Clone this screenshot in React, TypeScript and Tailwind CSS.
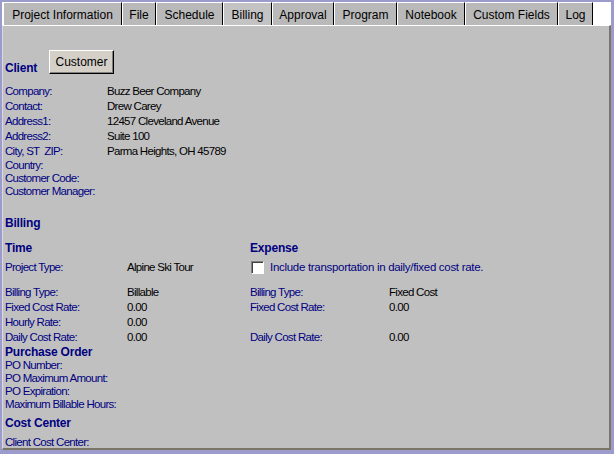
import React from "react";

const tabs = [
	{ name: "Project Information", w: "w-[119px]" },
	{ name: "File", w: "w-[34px]" },
	{ name: "Schedule", w: "w-[67px]" },
	{ name: "Billing", w: "w-[49px]", active: true },
	{ name: "Approval", w: "w-[62px]" },
	{ name: "Program", w: "w-[63px]" },
	{ name: "Notebook", w: "w-[68px]" },
	{ name: "Custom Fields", w: "w-[93px]" },
	{ name: "Log", w: "w-[35px]" },
];

const client: [string, string, string][] = [
	["Company:", "Buzz Beer Company", "h-[15px]"],
	["Contact:", "Drew Carey", "h-[15px]"],
	["Address1:", "12457 Cleveland Avenue", "h-[15px]"],
	["Address2:", "Suite 100", "h-[15px]"],
	["City, ST  ZIP:", "Parma Heights, OH 45789", "h-[15px]"],
	["Country:", "", "h-[13px]"],
	["Customer Code:", "", "h-[13px]"],
	["Customer Manager:", "", "h-[13px]"],
];

function Heading({ children, className = "" }: { children: React.ReactNode; className?: string }) {
	return (
		<div className={`text-[12px] font-bold leading-[14px] tracking-[-0.2px] text-[#000080] ${className}`}>
			{children}
		</div>
	);
}

function Field({ label, value, valueX, className = "" }: { label: string; value?: string; valueX: string; className?: string }) {
	return (
		<div className={`flex items-center text-[11.5px] tracking-[-0.7px] ${className}`}>
			<span className={`${valueX} shrink-0 whitespace-pre text-[#000080]`}>{label}</span>
			<span className="text-black">{value}</span>
		</div>
	);
}

export default function App() {
	return (
		<div className="h-[454px] w-[614px] overflow-hidden bg-[#9c9ccc] pl-[2px] font-['Liberation_Sans',Arial,sans-serif]">
			{/* tab strip */}
			<div className="mt-[2px] mr-[3px] flex h-[23px] bg-white pl-px">
				{tabs.map((t) => (
					<div
						key={t.name}
						className={`${t.w} flex items-center justify-center rounded-tl-[2px] border-t border-l border-r border-t-white border-l-white border-r-black pt-px text-[12px] text-black ${
							t.active ? "bg-[#c3c3c3]" : "bg-[#b9b9b9]"
						}`}
					>
						{t.name}
					</div>
				))}
			</div>

			{/* panel */}
			<div className="mr-[3px] flex h-[425px] flex-col border-t border-l border-r-2 border-b-2 border-t-white border-l-[#d8d8e8] border-r-[#7b7568] border-b-[#7b7568] bg-[#c0c0c0] pl-[2px]">
				<div className="mt-[24px] flex items-end">
					<Heading className="mb-[-1px] w-[44px]">Client</Heading>
					<button className="h-[24px] w-[65px] border border-t-white border-l-white border-r-black border-b-black bg-[#d4d0c8] text-[12px] text-black shadow-[inset_-1px_-1px_0_#808080]">
						Customer
					</button>
				</div>

				<div className="mt-[10px] flex flex-col">
					{client.map(([l, v, h]) => (
						<Field key={l} label={l} value={v} valueX="w-[102px]" className={h} />
					))}
				</div>

				<Heading className="mt-[18px]">Billing</Heading>

				<div className="mt-[11px] grid grid-cols-[245px_1fr]">
					<Heading>Time</Heading>
					<Heading>Expense</Heading>

					<Field label="Project Type:" value="Alpine Ski Tour" valueX="w-[122px]" className="mt-[5px] h-[15px]" />
					<div className="mt-[5px] flex h-[15px] items-center text-[11.5px] tracking-[-0.3px] text-[#000080]">
						<span className="mr-[6px] ml-px h-[13px] w-[13px] border border-t-[#808080] border-l-[#808080] border-r-white border-b-white bg-white shadow-[inset_1px_1px_0_#404040]" />
						Include transportation in daily/fixed cost rate.
					</div>

					<Field label="Billing Type:" value="Billable" valueX="w-[122px]" className="mt-[10px] h-[15px]" />
					<Field label="Billing Type:" value="Fixed Cost" valueX="w-[139px]" className="mt-[10px] h-[15px]" />

					<Field label="Fixed Cost Rate:" value="0.00" valueX="w-[122px]" className="h-[15px]" />
					<Field label="Fixed Cost Rate:" value="0.00" valueX="w-[139px]" className="h-[15px]" />

					<Field label="Hourly Rate:" value="0.00" valueX="w-[122px]" className="h-[15px]" />
					<div className="h-[15px]" />

					<Field label="Daily Cost Rate:" value="0.00" valueX="w-[122px]" className="h-[15px]" />
					<Field label="Daily Cost Rate:" value="0.00" valueX="w-[139px]" className="h-[15px]" />
				</div>

				<Heading className="leading-[13px]">Purchase Order</Heading>
				<div className="flex flex-col">
					<Field label="PO Number:" valueX="w-[122px]" className="h-[13px]" />
					<Field label="PO Maximum Amount:" valueX="w-[122px]" className="h-[13px]" />
					<Field label="PO Expiration:" valueX="w-[122px]" className="h-[13px]" />
					<Field label="Maximum Billable Hours:" valueX="w-[122px]" className="h-[13px]" />
				</div>

				<Heading className="mt-[5px]">Cost Center</Heading>
				<Field label="Client Cost Center:" valueX="w-[122px]" className="mt-[6px] h-[13px]" />
			</div>
		</div>
	);
}
